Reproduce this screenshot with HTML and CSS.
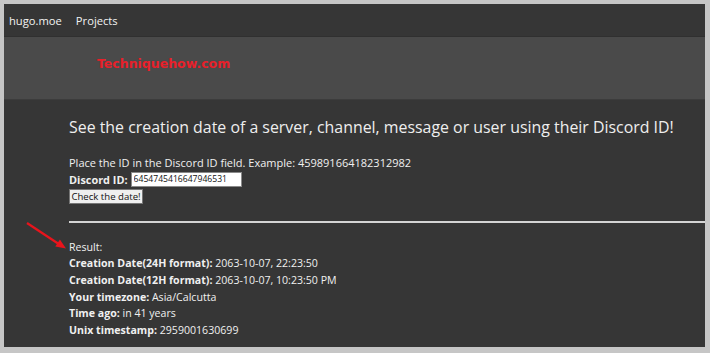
FILE: index.html
```html
<!DOCTYPE html>
<html>
<head>
<meta charset="utf-8">
<link rel="stylesheet" href="styles.css">
</head>
<body>
<div class="page">
  <nav class="nav">
    <a class="nav-link">hugo.moe</a>
    <a class="nav-link">Projects</a>
  </nav>
  <header class="hero">
    <span class="watermark">Techniquehow.com</span>
  </header>
  <main class="main">
    <svg class="arrow" width="50" height="37" viewBox="0 0 50 37">
      <line x1="7" y1="7" x2="38" y2="27.5" stroke="#e8141c" stroke-width="2.2"/>
      <polygon points="46,32.5 35.3,30.4 39.9,23.4" fill="#e8141c"/>
    </svg>
    <h1 class="title">See the creation date of a server, channel, message or user using their Discord ID!</h1>
    <p class="hint">Place the ID in the Discord ID field. Example: 459891664182312982</p>
    <div class="field"><label class="label">Discord ID:</label><input class="input" type="text" value="6454745416647946531"></div>
    <button class="btn">Check the date!</button>
    <hr class="rule">
    <div class="result">
      <div class="row">Result:</div>
      <div class="row"><b>Creation Date(24H format):</b> 2063-10-07, 22:23:50</div>
      <div class="row"><b>Creation Date(12H format):</b> 2063-10-07, 10:23:50 PM</div>
      <div class="row"><b>Your timezone:</b> Asia/Calcutta</div>
      <div class="row"><b>Time ago:</b> in 41 years</div>
      <div class="row"><b>Unix timestamp:</b> 2959001630699</div>
    </div>
  </main>
</div>
</body>
</html>
```
FILE: styles.css
```css
html, body { margin: 0; padding: 0; }
body {
  background: #c6c6c6;
  padding: 4px 5px 6px 4px;
  font-family: "Open Sans", "Noto Sans", sans-serif;
  color: #f0f0f0;
  overflow: hidden;
}
.page {
  background: #363636;
  height: 343px;
  overflow: hidden;
}
.nav {
  height: 32px;
  border-bottom: 1px solid #303030;
  display: flex;
  align-items: center;
  gap: 14px;
  padding-left: 5px;
}
.nav-link {
  font-size: 11.2px;
  color: #f2f2f2;
}
.hero {
  height: 62px;
  background: #4a4a4a;
  border-bottom: 1px solid #3c3c3c;
  display: flex;
  align-items: center;
  padding-left: 93px;
}
.watermark {
  font-family: "DejaVu Sans", sans-serif;
  font-weight: bold;
  font-size: 12.5px;
  color: #e8202a;
  margin-top: -9px;
}
.main {
  padding-left: 65px;
  padding-top: 17px;
  position: relative;
}
.title {
  font-size: 15.9px;
  font-weight: normal;
  line-height: 20px;
  margin: 0 0 18px 0;
  color: #eeeeee;
  white-space: nowrap;
}
.hint {
  font-size: 11px;
  margin: 0;
  line-height: 16px;
}
.field {
  display: flex;
  align-items: center;
  gap: 3px;
  height: 16px;
  font-size: 10.9px;
}
.label { font-weight: bold; }
.input {
  box-sizing: border-box;
  width: 111px;
  height: 15px;
  border: 1px solid #8a8a8a;
  padding: 0 2px;
  font-family: "Open Sans", sans-serif;
  font-size: 8.6px;
  color: #111;
  background: #fff;
  margin: 0;
}
.btn {
  display: block;
  box-sizing: border-box;
  margin-top: 2px;
  height: 15px;
  width: 74px;
  padding: 0;
  font-family: "Open Sans", sans-serif;
  font-size: 9.6px;
  background: #efefef;
  color: #111;
  border: 1px solid #767676;
  border-radius: 0;
  line-height: 13px;
}
.rule {
  margin: 17px 0 0 0;
  border: 0;
  height: 2px;
  background: #d4d4d4;
}
.result {
  margin-top: 15.5px;
  font-size: 10.6px;
}
.row { line-height: 16.7px; }
.arrow {
  position: absolute;
  left: 16px;
  top: 116px;
}
```
